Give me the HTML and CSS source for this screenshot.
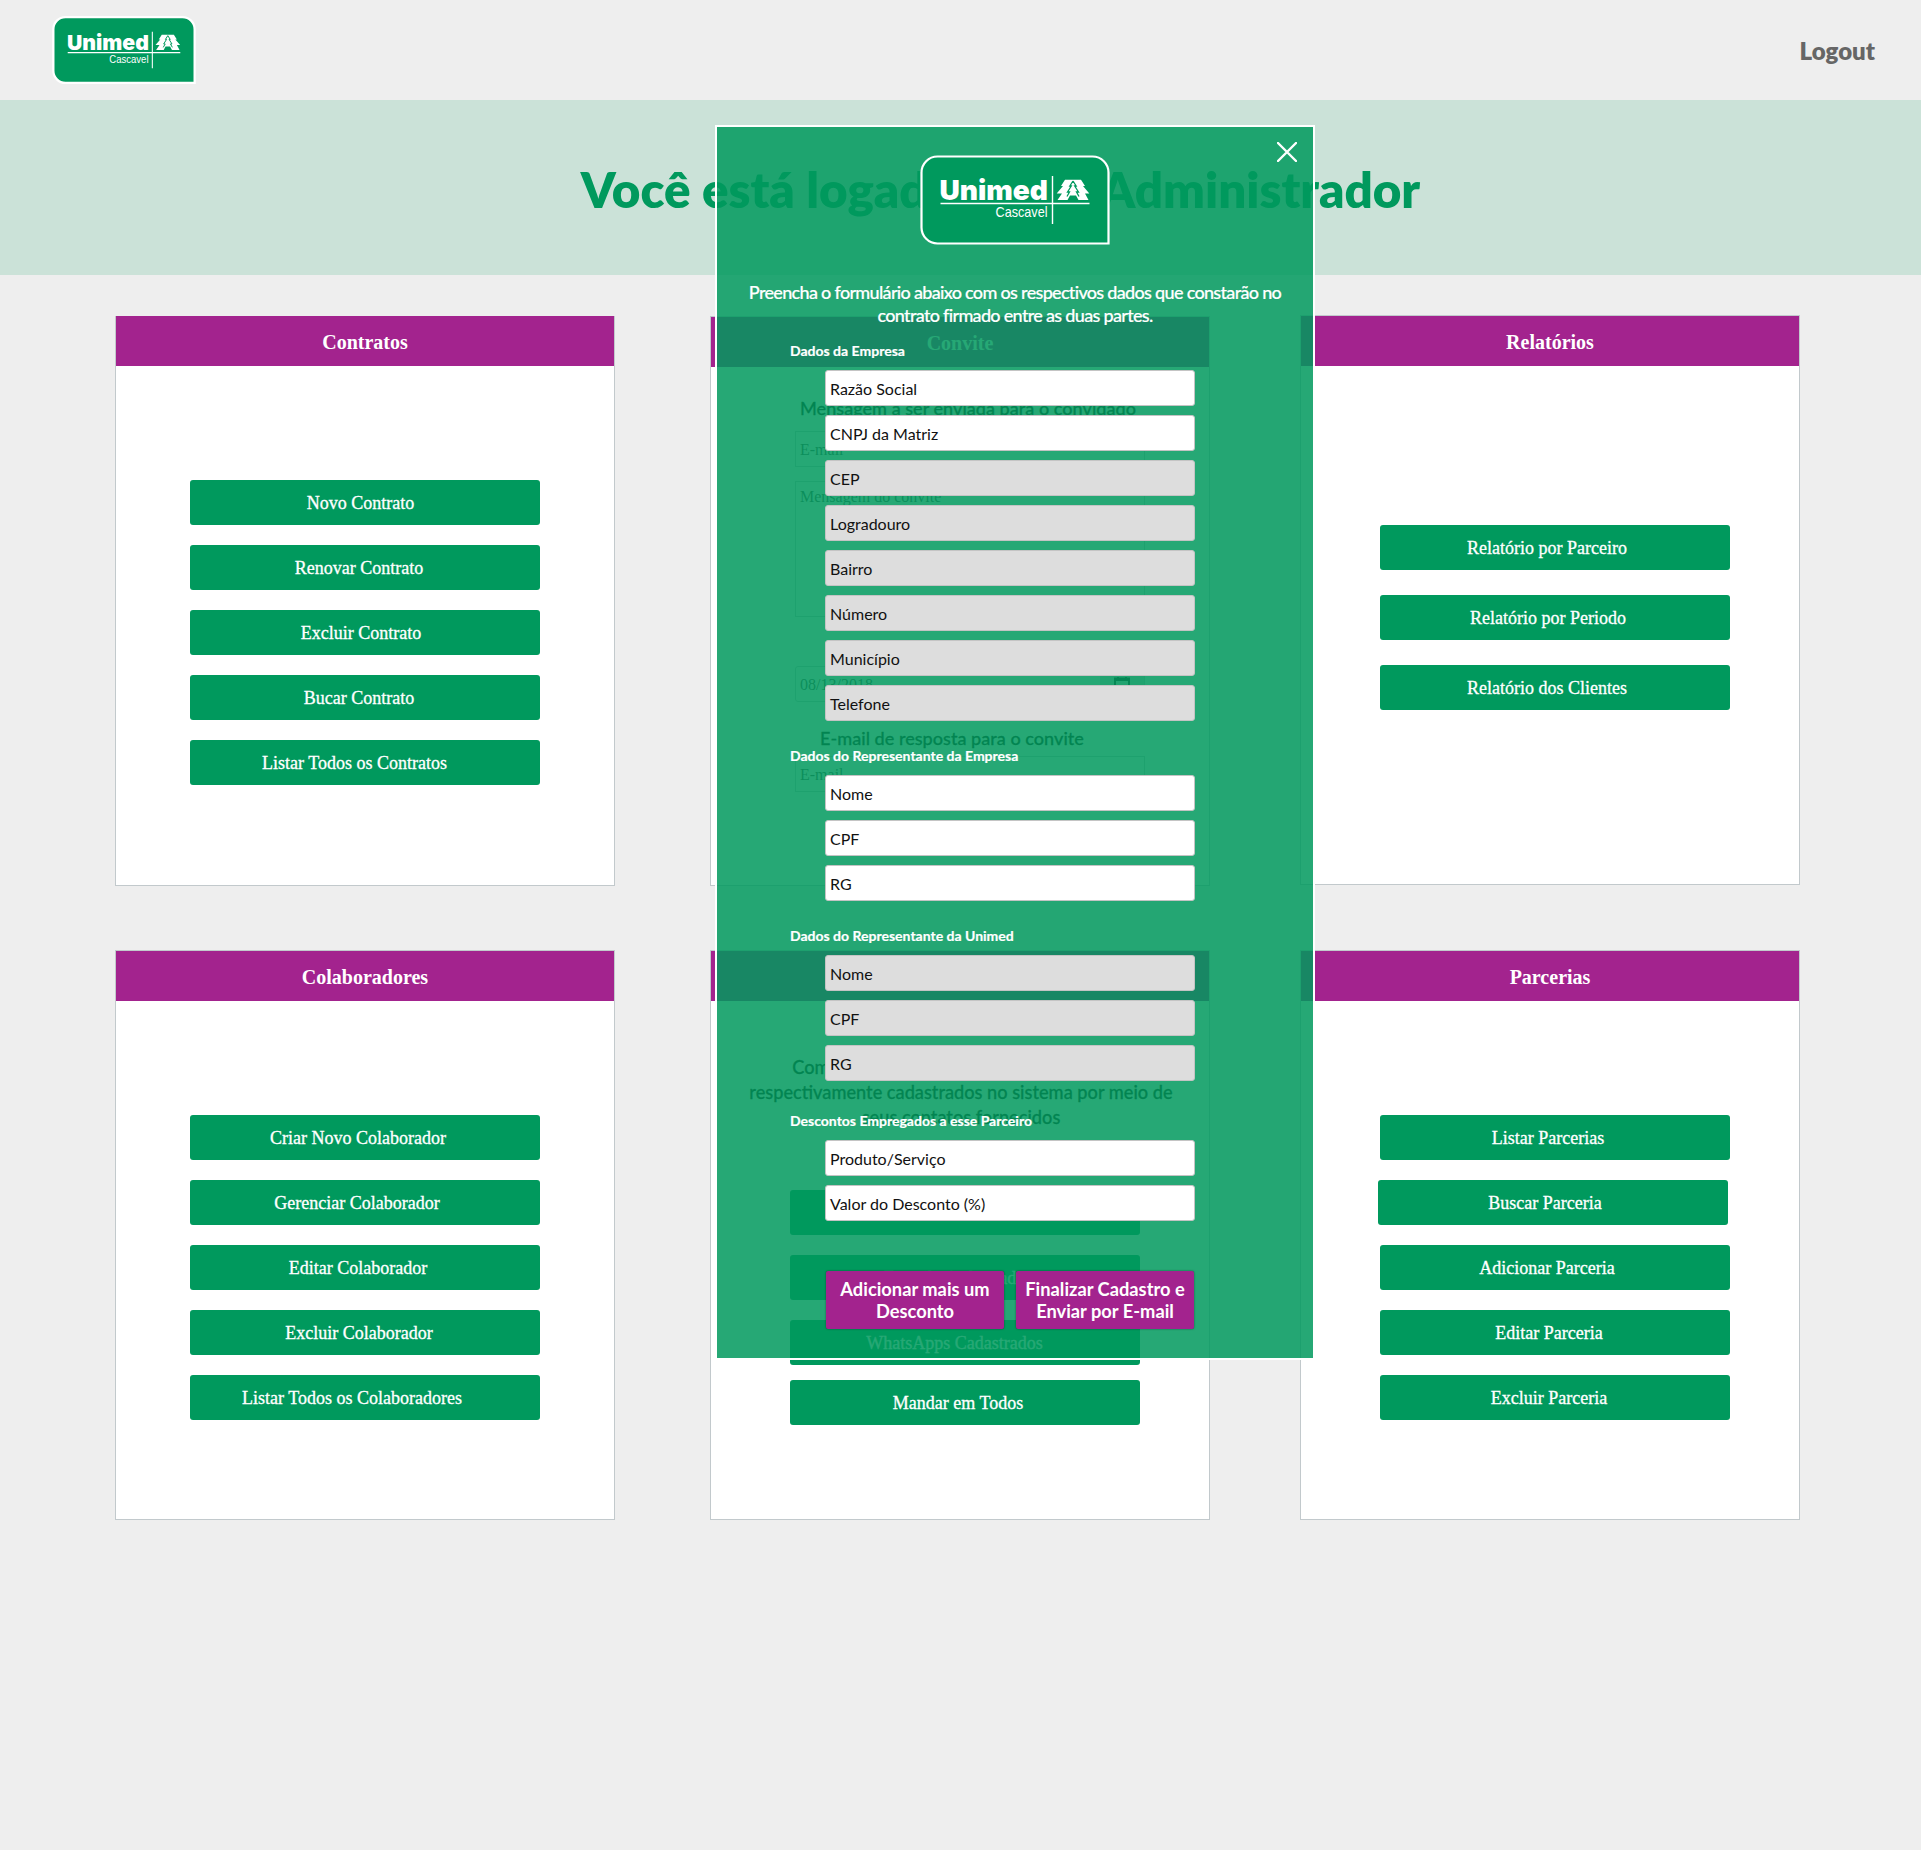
FILE: index.html
```html
<!DOCTYPE html>
<html lang="pt-BR">
<head>
<meta charset="utf-8">
<title>Unimed Cascavel - Administrador</title>
<link rel="stylesheet" href="styles.css">
</head>
<body>
<svg width="0" height="0" class="defs" aria-hidden="true">
  <symbol id="logo" viewBox="0 0 190 90" overflow="visible">
    <path d="M17.500 1.500H172.500A16 16 0 0 1 188.500 17.500V88.500H17.500A16 16 0 0 1 1.500 72.500V17.500A16 16 0 0 1 17.500 1.500Z" fill="#00995d" stroke="#fff"/>
    <text x="19.500" y="45" textLength="108.500" lengthAdjust="spacingAndGlyphs" class="logo-name">Unimed</text>
    <text x="75.500" y="62" textLength="52" lengthAdjust="spacingAndGlyphs" class="logo-city">Cascavel</text>
    <path d="M20.500 48.500H169.500M132.500 21V69" stroke="#fff" stroke-width="1.400" fill="none"/>
    <path d="M145 24.700H161L165 31H163L169.300 38.500H165L168.500 45H158.500L156 40.500H150L147.500 45H137.500L142 38.500H136.700L143 31H141Z" fill="#fff"/>
    <path d="M153 26L149.800 31H151.300L147.500 37H149.500L147 41.500M153 26L156.200 31H154.700L158.500 37H156.500L159 41.500" fill="none" stroke="#00995d" stroke-width="1.300"/>
  </symbol>
</svg>

<header class="topbar">
  <svg class="brand"><use href="#logo"/></svg>
  <a class="logout">Logout</a>
</header>
<section class="banner"><h1>Você está logado como Administrador</h1></section>

<main class="grid">
  <section class="card flush">
    <h2>Contratos</h2>
    <div class="actions">
      <button class="p9">Novo Contrato</button>
      <button class="p12">Renovar Contrato</button>
      <button class="p8">Excluir Contrato</button>
      <button class="p12">Bucar Contrato</button>
      <button class="p21">Listar Todos os Contratos</button>
    </div>
  </section>
  <section class="card invite">
    <h2>Convite</h2>
    <p class="msg-title">Mensagem a ser enviada para o convidado</p>
    <div class="box">E-mail</div>
    <div class="box area">Mensagem do convite</div>
    <div class="box date"><span>08/13/2018</span><span class="cal"><svg viewBox="0 0 16 16"><path d="M1 2.500H15V15H1ZM1 4H15M4 1V3M12 1V3" fill="none" stroke="#222" stroke-width="2"/><path d="M8 9H12V12H8Z" fill="#222"/></svg></span></div>
    <p class="reply-title">E-mail de resposta para o convite</p>
    <div class="box reply">E-mail</div>
  </section>
  <section class="card raised">
    <h2>Relatórios</h2>
    <div class="actions reports">
      <button class="p16">Relatório por Parceiro</button>
      <button class="p14">Relatório por Periodo</button>
      <button class="p16">Relatório dos Clientes</button>
    </div>
  </section>
  <section class="card">
    <h2>Colaboradores</h2>
    <div class="actions">
      <button class="p14">Criar Novo Colaborador</button>
      <button class="p16">Gerenciar Colaborador</button>
      <button class="p14">Editar Colaborador</button>
      <button class="p12">Excluir Colaborador</button>
      <button class="p26">Listar Todos os Colaboradores</button>
    </div>
  </section>
  <section class="card contact">
    <h2>Contato</h2>
    <p class="contact-text">Comunique-se com clientes e parceiros ou<br>respectivamente cadastrados no sistema por meio de<br>seus contatos fornecidos</p>
    <div class="actions contacts">
      <button class="p21">Telefones Cadastrados</button>
      <button class="p14">E-mails Cadastrados</button>
      <button class="p21">WhatsApps Cadastrados</button>
      <button class="p14 last">Mandar em Todos</button>
    </div>
  </section>
  <section class="card">
    <h2>Parcerias</h2>
    <div class="actions">
      <button class="p14">Listar Parcerias</button>
      <button class="p16 out">Buscar Parceria</button>
      <button class="p16">Adicionar Parceria</button>
      <button class="p12">Editar Parceria</button>
      <button class="p12">Excluir Parceria</button>
    </div>
  </section>
</main>

<div class="modal" role="dialog">
  <svg class="close" viewBox="0 0 20 20"><path d="M1 1L19 19M19 1L1 19" stroke="#fff" stroke-width="2.400" stroke-linecap="round"/></svg>
  <svg class="modal-logo"><use href="#logo"/></svg>
  <p class="intro">Preencha o formulário abaixo com os respectivos dados que constarão no<br>contrato firmado entre as duas partes.</p>
  <h3>Dados da Empresa</h3>
  <div class="fields">
    <div class="field">Razão Social</div>
    <div class="field">CNPJ da Matriz</div>
    <div class="field off">CEP</div>
    <div class="field off">Logradouro</div>
    <div class="field off">Bairro</div>
    <div class="field off">Número</div>
    <div class="field off">Município</div>
    <div class="field off">Telefone</div>
  </div>
  <h3>Dados do Representante da Empresa</h3>
  <div class="fields">
    <div class="field">Nome</div>
    <div class="field">CPF</div>
    <div class="field">RG</div>
  </div>
  <h3>Dados do Representante da Unimed</h3>
  <div class="fields">
    <div class="field off">Nome</div>
    <div class="field off">CPF</div>
    <div class="field off">RG</div>
  </div>
  <h3 class="discounts">Descontos Empregados a esse Parceiro</h3>
  <div class="fields">
    <div class="field">Produto/Serviço</div>
    <div class="field">Valor do Desconto (%)</div>
  </div>
  <div class="submit">
    <button>Adicionar mais um<br>Desconto</button>
    <button>Finalizar Cadastro e<br>Enviar por E-mail</button>
  </div>
</div>
</body>
</html>
```
FILE: styles.css
```css
* { box-sizing: border-box; }
body { margin: 0; min-height: 1850px; position: relative; background: #eee; font-family: Lato, sans-serif; }
h1, h2, h3, p { margin: 0; }
button { border: 0; margin: 0; }
.defs { position: absolute; }
.logo-name { font: 900 27.500px Inter, sans-serif; fill: #fff; }
.logo-city { font: 15px "Liberation Sans", sans-serif; fill: #fff; }

.topbar { height: 100px; padding: 16px 46px 0 52px; display: flex; justify-content: space-between; align-items: flex-start; }
.brand { width: 144px; height: 68px; overflow: visible; stroke-width: 3px; }
.brand text, .modal-logo text { stroke: none; }
.logout { font-size: 24px; line-height: 30px; font-weight: 800; color: #666; margin-top: 20px; }
.banner { height: 175px; background: #cbe2d8; display: flex; justify-content: center; padding: 59px 0 0 80px; }
.banner h1 { font-size: 49.300px; line-height: 60px; font-weight: 800; color: #00995d; white-space: nowrap; }

.grid { padding: 41px 0 0 115px; display: grid; grid-template-columns: 595px 590px 500px; grid-template-rows: 570px 570px; row-gap: 64px; }
.card { width: 500px; height: 570px; background: #fff; border: 1px solid #c2c9cc; }
.card.flush { border-top: 0; }
.card.raised { margin-top: -1px; }
.card h2 { height: 50px; background: #a3238e; color: #fff; text-align: center; font: bold 20px/52px "Liberation Serif", serif; }
.actions { display: flex; flex-direction: column; gap: 20px; padding: 114px 0 0 74px; }
.reports { padding-top: 159px; padding-left: 79px; gap: 25px; }
.actions button { width: 350px; height: 45px; flex: none; border-radius: 3px; background: #00995d; color: #fff; font: 18px/46px "Liberation Serif", serif; text-align: center; padding: 0; white-space: nowrap; -webkit-text-stroke: .3px #fff; }
.card:nth-child(6) .actions { padding-left: 79px; }
.actions .out { margin-left: -2px; }
.actions .p8 { padding-right: 8px; }
.actions .p9 { padding-right: 9px; }
.actions .p12 { padding-right: 12px; }
.actions .p14 { padding-right: 14px; }
.actions .p16 { padding-right: 16px; }
.actions .p21 { padding-right: 21px; }
.actions .p26 { padding-right: 26px; }

.msg-title, .reply-title { color: #111; font-weight: 500; font-size: 18.100px; line-height: 24px; text-align: center; -webkit-text-stroke: .3px #111; }
.msg-title { padding: 29px 0 0 16px; }
.reply-title { padding-right: 16px; margin: 24px 0 6px; }
.box { width: 350px; height: 36px; margin: 11px 0 0 84px; padding-left: 4px; border: 1px solid #c8cfd0; font: 16px/36px "Liberation Serif", serif; color: #555; }
.area { height: 136px; margin-top: 14px; line-height: 30px; }
.date { margin-top: 49px; display: flex; justify-content: space-between; border-radius: 3px; }
.reply { margin-top: 6px; }
.cal { width: 44px; background: #ddd; padding: 9px 0 0 14px; line-height: 0; }
.cal svg { width: 16px; height: 16px; }
.contact-text { width: 440px; margin: 54px 0 0 30px; color: #111; font-size: 18.200px; font-weight: 500; line-height: 25px; text-align: center; white-space: nowrap; -webkit-text-stroke: .3px #111; }
.contacts { padding: 60px 0 0 79px; }
.contacts .last { margin-top: -5px; }

.modal { position: absolute; left: 715px; top: 125px; width: 600px; height: 1235px; border: 2px solid #fff; background: rgba(0, 153, 93, .85); background-clip: padding-box; color: #fff; padding-top: 28px; }
.close { position: absolute; right: 16px; top: 15px; width: 20px; height: 20px; }
.modal-logo { display: block; width: 190px; height: 90px; margin: 0 auto; stroke-width: 2.200px; overflow: visible; }
.intro { font-size: 18px; line-height: 23px; font-weight: 500; letter-spacing: -.68px; text-align: center; padding-top: 36px; white-space: nowrap; -webkit-text-stroke: .2px #fff; }
.modal h3 { font-size: 14px; line-height: 20px; font-weight: 700; padding-left: 73px; margin: 25px 0 9px; -webkit-text-stroke: .2px #fff; }
.modal .intro + h3 { margin-top: 14px; }
.modal h3.discounts { margin-top: 30px; }
.fields { display: flex; flex-direction: column; gap: 9px; padding-left: 108px; }
.field { width: 370px; height: 36px; border: 1px solid #c4c4c4; border-radius: 3px; background: #fff; color: #111; font-size: 16px; line-height: 35px; padding-left: 4px; }
.off { background: #ddd; }
.submit { display: flex; gap: 12px; margin: 50px 0 0 109px; }
.submit button { width: 178px; height: 58px; border-radius: 2px; background: #a3238e; color: #fff; font: 700 18.300px/22px Lato, sans-serif; padding: 0; box-shadow: 0 0 2px rgba(0, 0, 0, .5); white-space: nowrap; }
```
